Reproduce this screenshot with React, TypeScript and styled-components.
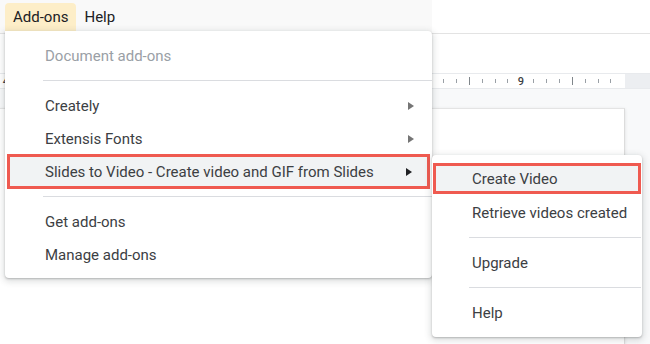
import React from "react";
import styled, { createGlobalStyle } from "styled-components";

const GlobalStyle = createGlobalStyle`
  html, body {
    margin: 0;
    padding: 0;
    background: #fff;
    overflow: hidden;
  }
  body {
    font-family: Roboto, "Liberation Sans", Arial, sans-serif;
  }
`;

type MenuEntry =
  | { kind: "item"; label: string; disabled?: boolean; submenu?: boolean; active?: boolean }
  | { kind: "divider" };

const mainItems: MenuEntry[] = [
  { kind: "item", label: "Document add-ons", disabled: true },
  { kind: "divider" },
  { kind: "item", label: "Creately", submenu: true },
  { kind: "item", label: "Extensis Fonts", submenu: true },
  { kind: "item", label: "Slides to Video - Create video and GIF from Slides", submenu: true, active: true },
  { kind: "divider" },
  { kind: "item", label: "Get add-ons" },
  { kind: "item", label: "Manage add-ons" },
];

const subItems: MenuEntry[] = [
  { kind: "item", label: "Create Video", active: true },
  { kind: "item", label: "Retrieve videos created" },
  { kind: "divider" },
  { kind: "item", label: "Upgrade" },
  { kind: "divider" },
  { kind: "item", label: "Help" },
];

// ruler ticks, counted from the right-most visible one
const TICK_COUNT = 48;
const ticks = Array.from({ length: TICK_COUNT }, (_, i) => {
  const k = TICK_COUNT - 1 - i;
  if (k % 8 === 7) return { type: "label", text: String(9 - (k - 7) / 8) };
  if (k % 8 === 3) return { type: "long" };
  return { type: "short" };
});

const App: React.FC = () => {
  return (
    <Screen>
      <GlobalStyle />
      <TopBar>
        <MenuStrip>
          <MenuTab open>Add-ons</MenuTab>
          <MenuTab>Help</MenuTab>
        </MenuStrip>
        <TitleSpace />
      </TopBar>
      <Toolbar />
      <RulerRow>
        <RulerTrack>
          {ticks.map((t, i) => (
            <TickCell key={i}>
              {t.type === "label" ? <TickLabel>{t.text}</TickLabel> : <Tick long={t.type === "long"} />}
            </TickCell>
          ))}
        </RulerTrack>
        <RulerMargin />
      </RulerRow>
      <Workspace>
        <Page />
      </Workspace>

      <Dropdown>
        {mainItems.map((entry, i) =>
          entry.kind === "divider" ? (
            <Divider key={i} />
          ) : (
            <Item key={i} disabled={entry.disabled} active={entry.active}>
              <ItemLabel>{entry.label}</ItemLabel>
              {entry.submenu && <Arrow dark={entry.active} />}
            </Item>
          )
        )}
      </Dropdown>

      <SubMenu>
        {subItems.map((entry, i) =>
          entry.kind === "divider" ? (
            <SubDivider key={i} />
          ) : (
            <SubItem key={i} active={entry.active}>
              {entry.label}
            </SubItem>
          )
        )}
      </SubMenu>
    </Screen>
  );
};

const Screen = styled.div`
  position: relative;
  width: 650px;
  height: 344px;
  overflow: hidden;
  display: flex;
  flex-direction: column;
  background: #fff;
`;

const TopBar = styled.div`
  display: flex;
  height: 33px;
  border-bottom: 1px solid #e3e3e3;
  flex-shrink: 0;
`;

const MenuStrip = styled.div`
  width: 432px;
  box-sizing: border-box;
  display: flex;
  align-items: flex-start;
  padding: 3px 0 0 5px;
  background: #f9f9f9;
`;

const TitleSpace = styled.div`
  flex: 1;
  background: #fff;
`;

const MenuTab = styled.div<{ open?: boolean }>`
  height: 28px;
  line-height: 28px;
  padding: 0 8px;
  font-size: 15px;
  color: #202124;
  border-radius: 4px 4px 0 0;
  background: ${(p) => (p.open ? "#fdeec8" : "transparent")};
`;

const Toolbar = styled.div`
  height: 39px;
  background: #fff;
  flex-shrink: 0;
`;

const RulerRow = styled.div`
  display: flex;
  height: 14px;
  border-top: 1px solid #e8eaed;
  border-bottom: 1px solid #e8eaed;
  flex-shrink: 0;
`;

const RulerTrack = styled.div`
  width: 625px;
  display: flex;
  justify-content: flex-end;
  align-items: center;
  padding-right: 7.6px;
  box-sizing: border-box;
  overflow: hidden;
  background: #fff;
`;

const RulerMargin = styled.div`
  flex: 1;
  background: #eceef1;
`;

const TickCell = styled.div`
  flex: 0 0 12.875px;
  height: 14px;
  display: flex;
  align-items: center;
  justify-content: center;
`;

const Tick = styled.div<{ long?: boolean }>`
  width: 1px;
  height: ${(p) => (p.long ? "8px" : "4px")};
  background: ${(p) => (p.long ? "#80868b" : "#9aa0a6")};
`;

const TickLabel = styled.span`
  font-size: 11px;
  line-height: 11px;
  color: #3c4043;
  font-weight: 500;
`;

const Workspace = styled.div`
  flex: 1;
  display: flex;
  padding-top: 19px;
  background: #f8f9fa;
`;

const Page = styled.div`
  width: 624px;
  background: #fff;
  border-top: 1px solid #e4e4e4;
  border-right: 1px solid #dcdcdc;
  box-shadow: 0 1px 3px rgba(60, 64, 67, 0.15);
`;

const Dropdown = styled.div`
  position: absolute;
  left: 5px;
  top: 31px;
  width: 427px;
  padding: 8px 0 7px;
  box-sizing: border-box;
  background: #fff;
  border-radius: 0 4px 4px 4px;
  box-shadow: 0 2px 6px 2px rgba(60, 64, 67, 0.15), 0 1px 2px rgba(60, 64, 67, 0.3);
  z-index: 2;
`;

const Item = styled.div<{ disabled?: boolean; active?: boolean }>`
  display: flex;
  align-items: center;
  height: ${(p) => (p.active ? "35px" : "33px")};
  margin: ${(p) => (p.active ? "-1px 2px" : "0")};
  padding: ${(p) => (p.active ? "0 15px 0 35px" : "0 18px 0 40px")};
  box-sizing: border-box;
  border: ${(p) => (p.active ? "3px solid #ef5a50" : "none")};
  background: ${(p) => (p.active ? "#f1f3f4" : "transparent")};
  font-size: 15px;
  color: ${(p) => (p.disabled ? "#9aa0a6" : "#3c4043")};
`;

const ItemLabel = styled.span`
  flex: 1;
  white-space: nowrap;
`;

const Arrow = styled.span<{ dark?: boolean }>`
  width: 0;
  height: 0;
  border-top: 4px solid transparent;
  border-bottom: 4px solid transparent;
  border-left: 6px solid ${(p) => (p.dark ? "#202124" : "#757575")};
`;

const Divider = styled.div`
  height: 1px;
  margin: 8px 0 8px 38px;
  background: #dadce0;
`;

const SubMenu = styled.div`
  position: absolute;
  left: 432px;
  top: 155px;
  width: 210px;
  padding: 8px 0;
  box-sizing: border-box;
  background: #fff;
  border-radius: 4px;
  box-shadow: 0 2px 6px 2px rgba(60, 64, 67, 0.15), 0 1px 2px rgba(60, 64, 67, 0.3);
  z-index: 3;
`;

const SubItem = styled.div<{ active?: boolean }>`
  display: flex;
  align-items: center;
  height: ${(p) => (p.active ? "31px" : "33px")};
  margin: ${(p) => (p.active ? "0 1px 2px" : "0")};
  padding-left: ${(p) => (p.active ? "36px" : "40px")};
  box-sizing: border-box;
  border: ${(p) => (p.active ? "3px solid #ef5a50" : "none")};
  background: ${(p) => (p.active ? "#f1f3f4" : "transparent")};
  font-size: 15px;
  color: #3c4043;
  white-space: nowrap;
`;

const SubDivider = styled.div`
  height: 1px;
  margin: 8px 1px 8px 37px;
  background: #dadce0;
`;

export default App;
